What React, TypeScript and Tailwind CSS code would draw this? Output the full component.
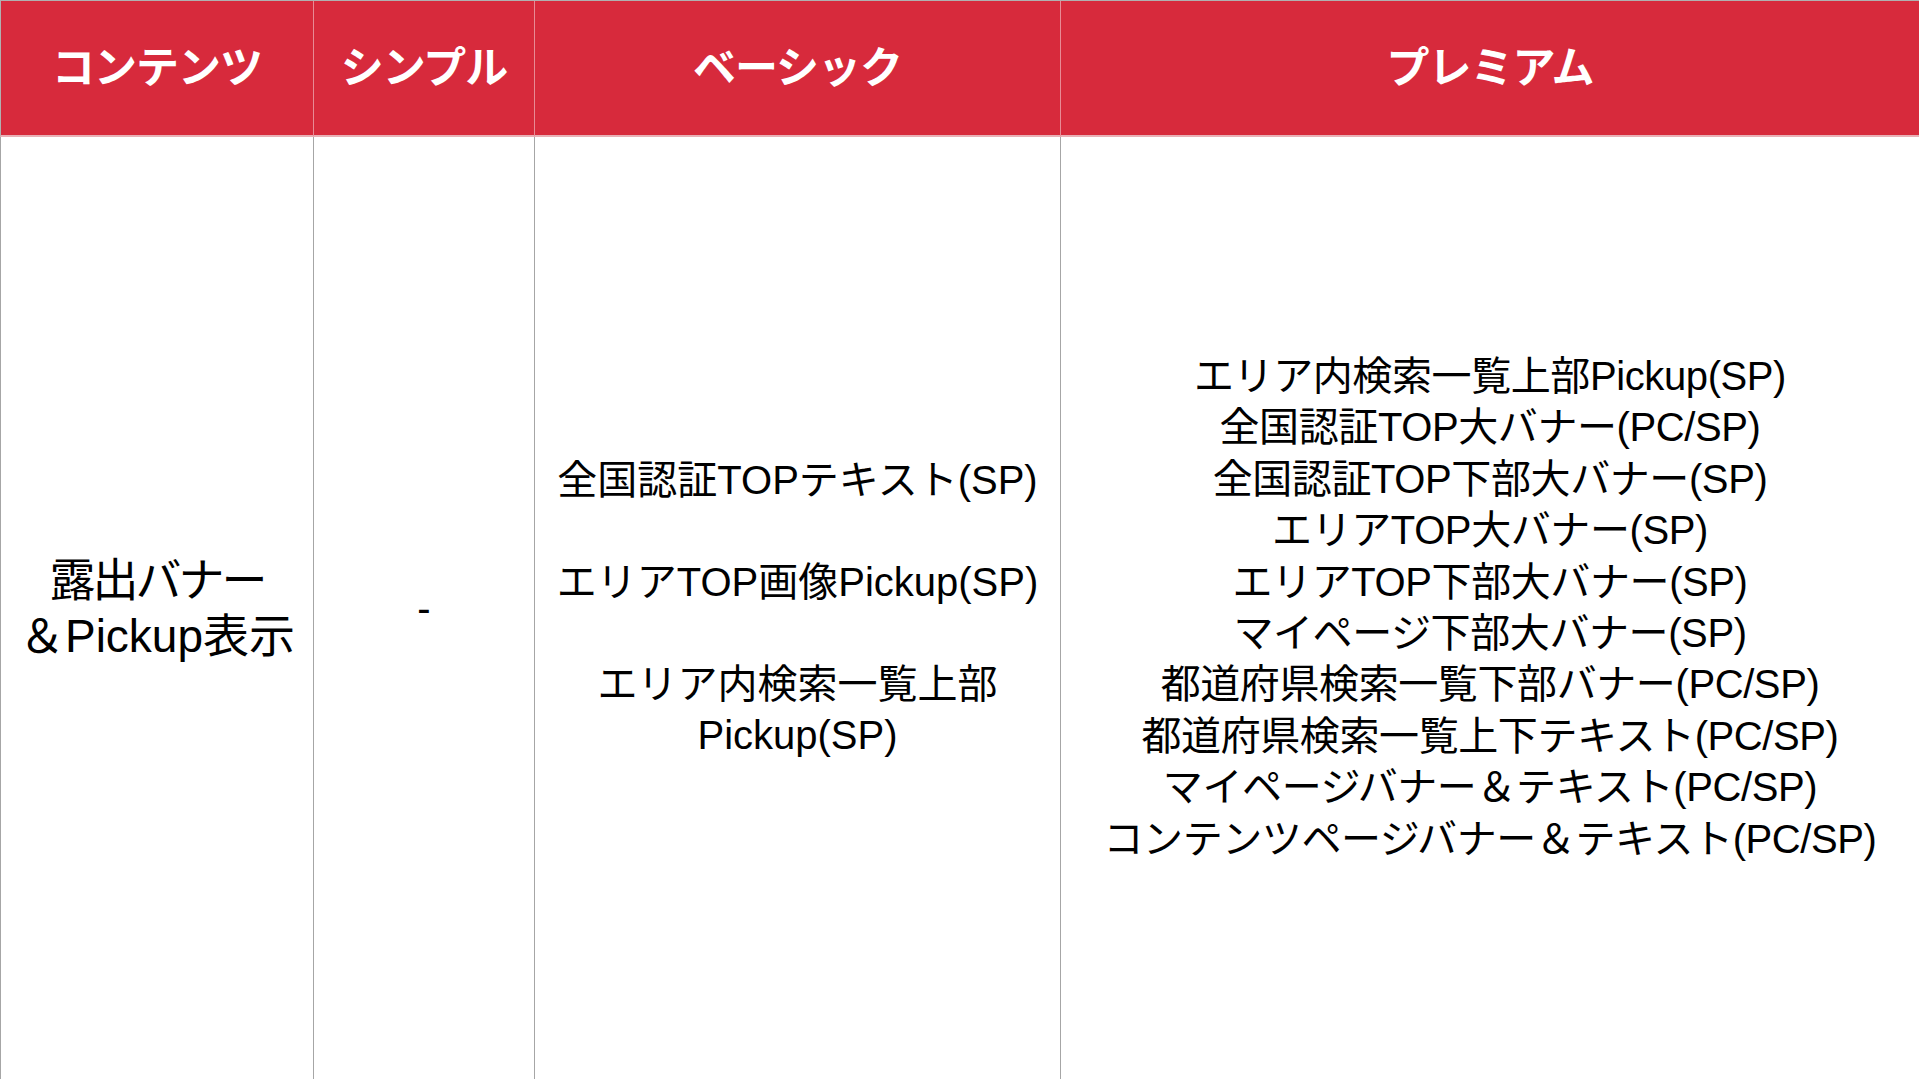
const premium = [
  "エリア内検索一覧上部Pickup(SP)",
  "全国認証TOP大バナー(PC/SP)",
  "全国認証TOP下部大バナー(SP)",
  "エリアTOP大バナー(SP)",
  "エリアTOP下部大バナー(SP)",
  "マイページ下部大バナー(SP)",
  "都道府県検索一覧下部バナー(PC/SP)",
  "都道府県検索一覧上下テキスト(PC/SP)",
  "マイページバナー＆テキスト(PC/SP)",
  "コンテンツページバナー＆テキスト(PC/SP)",
];

const headers = ["コンテンツ", "シンプル", "ベーシック", "プレミアム"];

const App = () => {
  return (
    <div className="w-[1919px] h-[1080px] overflow-hidden bg-white text-black font-['Liberation_Sans','Noto_Sans_CJK_JP',sans-serif]">
      <div className="grid grid-cols-[313px_221px_526px_1fr] border-t border-[#b0b0b0]">
        {headers.map((h, i) => (
          <div
            key={h}
            className={`h-[136px] pb-[8px] bg-[#d72a3c] border-b-2 border-[#e8b0b6] flex items-center justify-center text-white font-bold text-[43px] tracking-[-1px] font-['Noto_Sans_CJK_JP',sans-serif] ${
              i === 0 ? "border-l border-l-[#b0b0b0]" : "border-l border-l-[#e88a95]"
            }`}
          >
            {h}
          </div>
        ))}

        <div className="h-[942px] border-l border-[#a6a6a6] flex items-center justify-center text-center text-[46px] leading-[56px]">
          <div>
            <span className="tracking-[-3px]">露出バナー</span>
            <br />
            ＆Pickup表示
          </div>
        </div>
        <div className="h-[942px] border-l border-[#a6a6a6] flex items-center justify-center text-[40px] leading-[51px]">
          -
        </div>
        <div className="h-[942px] border-l border-[#a6a6a6] flex items-center justify-center text-center text-[40px] leading-[51px]">
          <div>
            <p>全国認証TOPテキスト(SP)</p>
            <p className="mt-[51px]">エリアTOP画像Pickup(SP)</p>
            <p className="mt-[51px]">
              エリア内検索一覧上部
              <br />
              Pickup(SP)
            </p>
          </div>
        </div>
        <div className="h-[942px] border-l border-[#a6a6a6] flex items-center justify-center text-center text-[40px] leading-[51.4px] tracking-[-0.4px]">
          <div>
            {premium.map((line) => (
              <p key={line}>{line}</p>
            ))}
          </div>
        </div>
      </div>
    </div>
  );
};

export default App;
